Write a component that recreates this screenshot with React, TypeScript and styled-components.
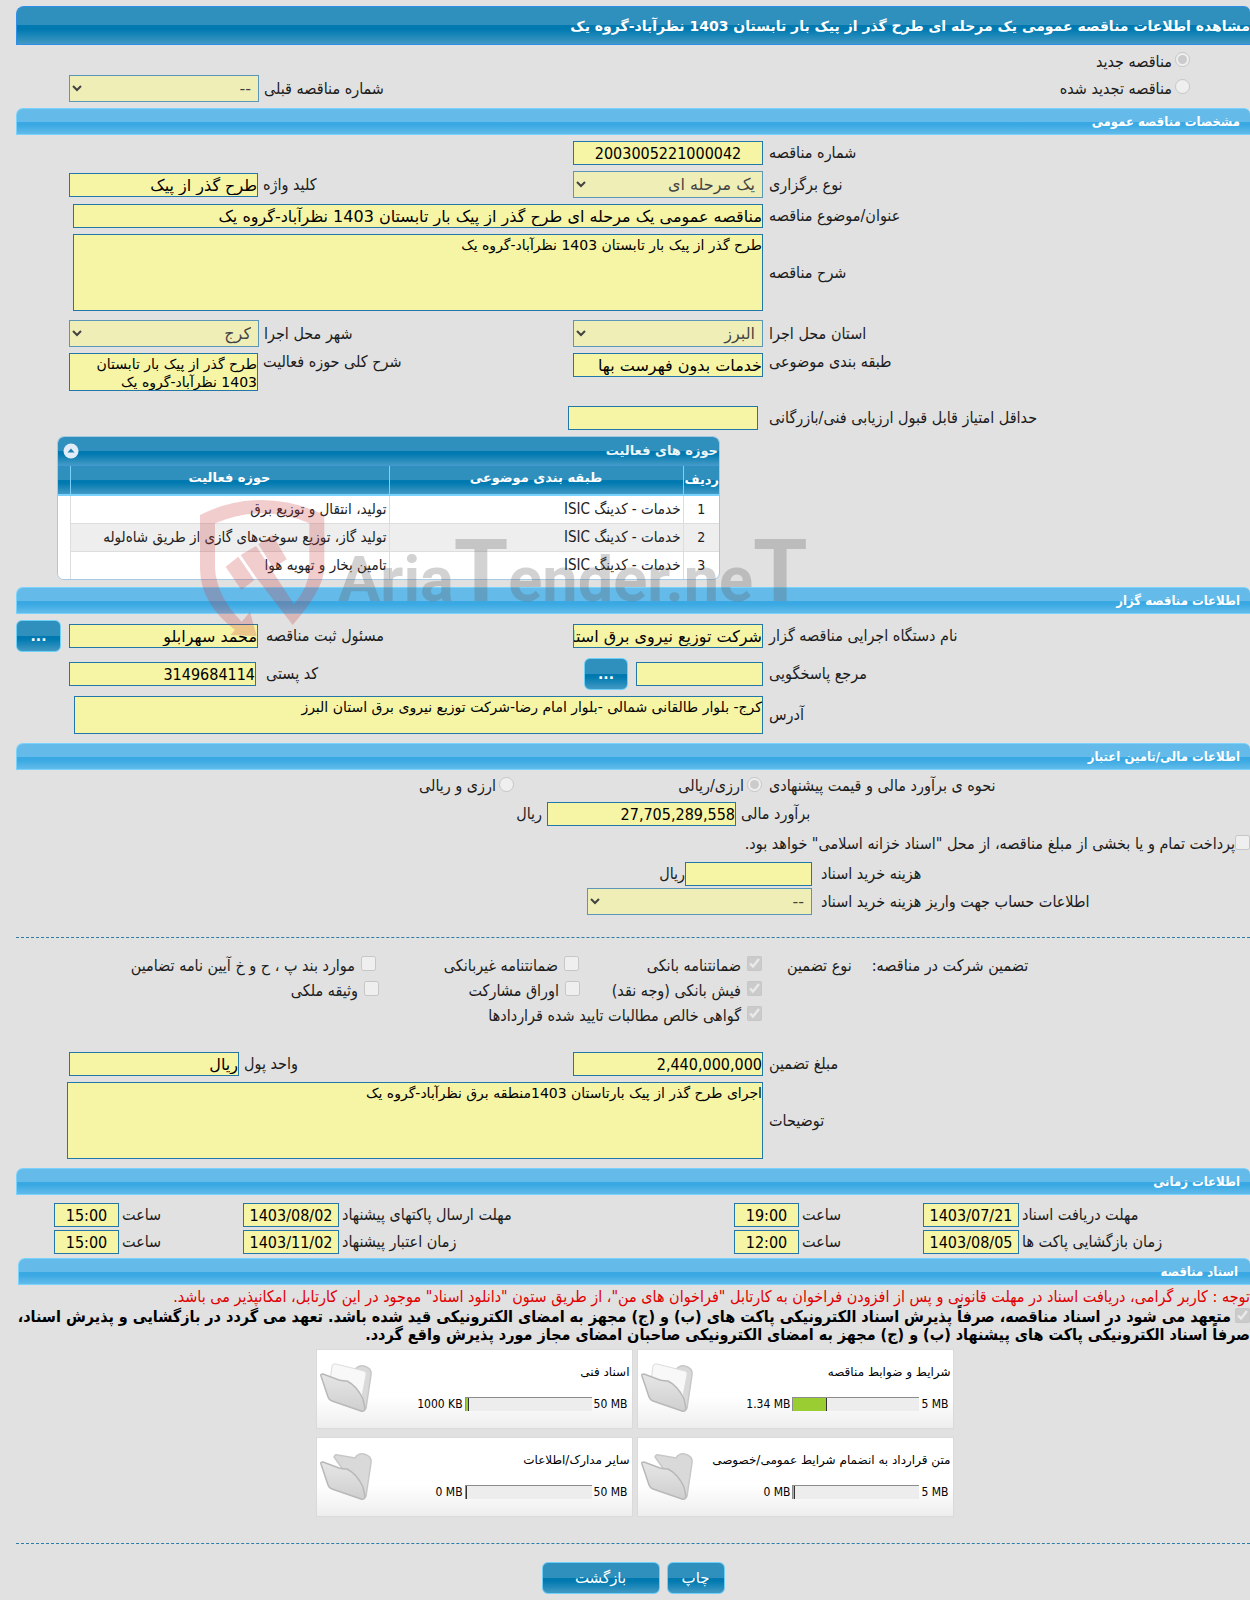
import React, { ReactNode } from "react";
import styled, { createGlobalStyle, css } from "styled-components";

const wide = `"DejaVu Sans", sans-serif`;
const narrow = `"DejaVu Sans Condensed", "DejaVu Sans", sans-serif`;

const GlobalStyle = createGlobalStyle`
  *, *::before, *::after { box-sizing: border-box; }
  html { background: #e1e1e1; }
  body {
    margin: 0;
    overflow-x: hidden;
    background: #e1e1e1;
    color: #1c1c1c;
    font-family: ${narrow};
    font-size: 16px;
    line-height: 18px;
  }
  input, select, textarea, button { font-family: ${wide}; margin: 0; }
`;

const deepBlue = css`
  background: linear-gradient(#2f90be 0, #2f90be 50%, #0079b0 50%, #0079b0 60%, #4299c4 100%);
`;

const field = css`
  border: 1px solid #2277a8;
  border-radius: 0;
  background: #f6f4a5;
  color: #000;
  outline: none;
`;

const Page = styled.main`
  position: relative;
  padding: 6px 0 6px 16px;
`;

const PageTitle = styled.h1`
  ${deepBlue}
  display: flex;
  align-items: center;
  height: 39px;
  margin: 0;
  border: 1px solid #2e8fe8;
  border-right: 0;
  border-radius: 8px 6px 0 0;
  color: #fff;
  font-family: ${wide};
  font-size: 14px;
  font-weight: bold;
`;

const SectionTitle = styled.h2<{ $inset?: boolean }>`
  display: flex;
  align-items: center;
  height: 27px;
  margin: 0 0 0 ${(p) => (p.$inset ? 2 : 0)}px;
  padding: 0 ${(p) => (p.$inset ? 12 : 10)}px;
  border: 1px solid #79d2fb;
  border-right: 0;
  border-radius: 7px 6px 0 0;
  background: linear-gradient(#64bbea 0, #64bbea 50%, #3aa9e3 52%, #3aa9e3 65%, #63bbea 100%);
  color: #fff;
  font-size: 13px;
  font-weight: bold;
`;

const Section = styled.section`
  display: flex;
  flex-direction: column;
  gap: 6px;
  padding: 6px 0;
`;

const Row = styled.div<{ $lead?: number; $space?: number; $top?: boolean }>`
  display: grid;
  grid-template-columns: minmax(0, ${(p) => p.$lead ?? 487}fr) minmax(0, ${(p) => 1234 - (p.$lead ?? 487)}fr);
  align-items: ${(p) => (p.$top ? "start" : "center")};
  margin-top: ${(p) => p.$space ?? 0}px;
`;

const LabelCell = styled.div<{ $gap?: number }>`
  display: flex;
  justify-content: flex-end;
  gap: 20px;
  padding-left: ${(p) => p.$gap ?? 6}px;
`;

const Body = styled.div<{ $gap?: number; $top?: boolean; $end?: number }>`
  display: flex;
  align-items: ${(p) => (p.$top ? "flex-start" : "center")};
  gap: ${(p) => p.$gap ?? 8}px;
  padding-left: ${(p) => p.$end ?? 0}px;
`;

const Side = styled.div<{ $end?: number; $gap?: number; $top?: boolean }>`
  display: flex;
  align-items: ${(p) => (p.$top ? "flex-start" : "center")};
  gap: ${(p) => p.$gap ?? 5}px;
  margin-right: auto;
  padding-left: ${(p) => p.$end ?? 53}px;
`;

const TextInput = styled.input<{ $w?: number; $center?: boolean; $digits?: boolean }>`
  ${field}
  width: ${(p) => (p.$w ? `${p.$w}px` : "100%")};
  height: 24px;
  padding: 1px 0 0;
  font-family: ${(p) => (p.$digits ? narrow : wide)};
  font-size: 16px;
  text-align: ${(p) => (p.$center ? "center" : "right")};
`;

const Area = styled.textarea<{ $w?: number; $h: number }>`
  ${field}
  display: block;
  width: ${(p) => (p.$w ? `${p.$w}px` : "100%")};
  height: ${(p) => p.$h}px;
  padding: 1px 0 0;
  resize: none;
  overflow: hidden;
  font-size: 14px;
  line-height: 18px;
`;

const Picker = styled.select<{ $w?: number }>`
  ${field}
  width: ${(p) => p.$w ?? 190}px;
  height: 27px;
  padding: 0 3px;
  font-size: 16px;
`;

const BlueButton = styled.button<{ $w: number }>`
  ${deepBlue}
  flex: none;
  width: ${(p) => p.$w}px;
  height: 32px;
  padding: 0;
  border: 1px solid #6fd0f7;
  border-radius: 6px;
  color: #fff;
  font-size: 15px;
`;

const MoreButton = styled(BlueButton)`
  font-size: 14px;
  font-weight: bold;
`;

const Tick = styled.input`
  flex: none;
  width: 15px;
  height: 15px;
`;

const Choice = styled.div<{ $w?: number; $gap?: number }>`
  display: flex;
  flex: none;
  align-items: center;
  gap: ${(p) => p.$gap ?? 3}px;
  width: ${(p) => (p.$w ? `${p.$w}px` : "auto")};
  min-height: 20px;

  ${Tick} { margin-bottom: 4px; }
`;

const Divider = styled.hr<{ $space: number }>`
  width: 100%;
  height: 0;
  margin: ${(p) => p.$space}px 0 0;
  border: 0;
  border-top: 1px dashed #2e7da6;
`;

const TypeChoice = styled.div`
  padding: 3px 0 6px;
`;

const TypeRow = styled.div`
  display: grid;
  grid-template-columns: minmax(0, 1fr) auto;
  align-items: center;
  height: 27px;
  padding-right: 60px;
`;

const Treasury = styled.div`
  display: flex;
  align-items: center;
  height: 24px;
`;

const Purchase = styled.div`
  display: grid;
  gap: 2px;
`;

const Guarantee = styled.div`
  display: grid;
  grid-auto-rows: 25px;
  padding: 15px 0 18px;
`;

const Spacer = styled.div`
  height: 3px;
`;

/* ---- activity table ---- */

const Panel = styled.div`
  width: 663px;
  margin: 0 auto 1px 41px;
  overflow: hidden;
  border: 1px solid #a6c9e2;
  border-radius: 7px;
  background: #fff;
`;

const PanelHead = styled.div`
  ${deepBlue}
  display: flex;
  align-items: center;
  justify-content: space-between;
  height: 29px;
  padding: 0 1px 0 5px;
  border-bottom: 1px solid #4297d7;
  color: #eaf5f7;
  font-family: ${wide};
  font-size: 13px;
  font-weight: bold;
`;

const Collapse = styled.button`
  display: block;
  width: 16px;
  height: 16px;
  padding: 0;
  border: 0;
  background: none;
`;

const Grid = styled.table`
  width: 100%;
  border-collapse: collapse;
  table-layout: fixed;
  font-size: 15px;

  th {
    ${deepBlue}
    height: 29px;
    padding: 0 2px 4px;
    border-bottom: 2px solid #79d2fb;
    border-left: 1px solid #79d2fb;
    color: #fff;
    font-family: ${wide};
    font-size: 13px;
    white-space: nowrap;
  }
  th:last-child, td:last-child { border-left: 0; }
  th:first-child { padding: 0 1px; overflow: hidden; }
  td {
    height: 28px;
    padding: 0 2px;
    border-left: 1px solid #ddd;
    border-bottom: 1px solid #ddd;
    color: #222;
    white-space: nowrap;
  }
  td:first-child { text-align: center; font-size: 14px; }
  td:last-child { background: #fff; border-bottom: 0; }
  tbody tr:nth-child(2) { background: #eee; }
  tbody tr:last-child td { border-bottom: 0; }
`;

/* ---- times ---- */

const Times = styled.div`
  display: grid;
  grid-template-columns:
    minmax(0, 231fr) 96px 124px 65px
    minmax(0, 395fr) 96px 124px 65px 38px;
  align-items: center;
  row-gap: 3px;
  padding: 8px 0 4px;
`;

const TimeLabel = styled.label`
  padding-left: 3px;
  text-align: left;
`;

/* ---- documents ---- */

const Notice = styled.p`
  margin: 3px 0 0;
  color: #e00000;
  white-space: nowrap;
`;

const Pledge = styled.div`
  margin: 2px 0 5px;
  color: #000;
  font-weight: bold;

  ${Tick} { vertical-align: -1px; margin-left: 4px; }
`;

const Cards = styled.div`
  display: grid;
  grid-template-columns: 317px 317px;
  justify-content: center;
  gap: 8px 4px;
  padding-left: 3px;
`;

const Card = styled.article`
  display: grid;
  grid-template-columns: 1fr 56px;
  height: 80px;
  padding: 0 2px 0 3px;
  border: 1px solid #dadada;
  background: linear-gradient(#fff 0, #fff 60%, #eee 100%);
  color: #000;

  svg { align-self: center; }
`;

const CardInfo = styled.div`
  display: flex;
  flex-direction: column;
  gap: 14px;
  padding-top: 13px;
`;

const CardName = styled.h3`
  margin: 0;
  font-family: ${wide};
  font-size: 12px;
  font-weight: normal;
  white-space: nowrap;
`;

const Usage = styled.div`
  display: flex;
  align-items: center;
  gap: 2px;
  padding-right: 2px;
  font-size: 12px;

  bdi { direction: ltr; white-space: nowrap; }
`;

const Track = styled.div`
  direction: ltr;
  width: 127px;
  height: 14px;
  border-top: 1px solid #8c8c8c;
  border-left: 1px solid #8c8c8c;
  background: #ededed;
`;

const Fill = styled.div`
  height: 100%;
  border-right: 1px solid #333;
  background: #9acd32;
`;

const Footer = styled.footer`
  display: flex;
  justify-content: center;
  gap: 7px;
  padding: 18px 0 0;
`;

/* ---- watermark ---- */

const Watermark = styled.div`
  position: absolute;
  top: 500px;
  left: 200px;
  display: flex;
  direction: ltr;
  align-items: flex-end;
  pointer-events: none;
`;

const Brand = styled.span`
  margin-left: 12px;
  padding-bottom: 18px;
  color: rgba(90, 90, 90, 0.27);
  font-family: Roboto, "Liberation Sans", sans-serif;
  font-size: 63px;
  font-weight: bold;
  line-height: 80px;

  big { font-size: 88px; }
`;

const Shield = () => (
  <svg width="126" height="138" viewBox="30 60 378 414" fill="rgba(205,55,60,0.25)">
    <path d="M30 105Q120 60 215 60Q310 60 403 105V265Q400 330 308 435L198 292L152 225L198 198L312 373Q356 320 358 270V130Q290 100 215 100Q145 100 75 130V265Q80 350 155 425L180 395L200 468L122 465L135 450Q30 370 30 265Z" />
    <path d="M107 260L145 230L193 300L154 330Z" />
    <path d="M205 192L248 165L290 238L250 265Z" />
  </svg>
);

const Folder = ({ full }: { full?: boolean }) => (
  <svg width="56" height="52" viewBox="0 0 56 52">
    <defs>
      <linearGradient id={full ? "ff" : "fe"} x1="0" y1="0" x2="0" y2="1">
        <stop offset="0" stopColor="#e6e6e6" />
        <stop offset="1" stopColor="#cfcfcf" />
      </linearGradient>
    </defs>
    <path d="M14 6Q15 3 18 4L35 7Q38 2 44 3Q52 5 51 12L46 45Q45 48 42 46Z" fill="#d9d9d9" stroke="#c8c8c8" strokeWidth="1.5" />
    {full && <path d="M12 3Q13 0 16 1L44 8Q47 9 46 12L41 38L10 18Z" fill="#f8f8f8" stroke="#dcdcdc" />}
    <path d="M1 13Q0 11 3 11L19 17Q23 18 27 18Q37 23 43 36L45 45Q45 49 41 48L12 38Q9 37 8 34Z" fill={`url(#${full ? "ff" : "fe"})`} stroke="#b8b8b8" strokeWidth="1.5" />
  </svg>
);

type CheckProps = { id: string; text: string; on?: boolean; w?: number; gap?: number; kind?: string; name?: string };
const Check = ({ id, text, on, w, gap = 6, kind = "checkbox", name }: CheckProps) => (
  <Choice $w={w} $gap={gap}>
    <Tick type={kind} id={id} name={name} defaultChecked={on} disabled />
    <label htmlFor={id}>{text}</label>
  </Choice>
);

type FieldRowProps = {
  id: string; label: string; children: ReactNode; lead?: number; gap?: number;
  space?: number; top?: boolean; end?: number; bodyGap?: number;
};
const FieldRow = ({ id, label, children, lead, gap, space, top, end, bodyGap }: FieldRowProps) => (
  <Row $lead={lead} $space={space} $top={top}>
    <LabelCell $gap={gap}><label htmlFor={id}>{label}</label></LabelCell>
    <Body $top={top} $end={end} $gap={bodyGap}>{children}</Body>
  </Row>
);

const activities = [
  "تولید، انتقال و توزیع برق",
  "تولید گاز، توزیع سوخت‌های گازی از طریق شاه‌لوله",
  "تامین بخار و تهویه هوا",
];

const times = [
  ["مهلت دریافت اسناد", "1403/07/21", "19:00", "مهلت ارسال پاکتهای پیشنهاد", "1403/08/02", "15:00"],
  ["زمان بازگشایی پاکت ها", "1403/08/05", "12:00", "زمان اعتبار پیشنهاد", "1403/11/02", "15:00"],
];

const documents = [
  { name: "شرایط و ضوابط مناقصه", max: "5 MB", used: "1.34 MB", share: 27 },
  { name: "اسناد فنی", max: "50 MB", used: "1000 KB", share: 3 },
  { name: "متن قرارداد به انضمام شرایط عمومی/خصوصی", max: "5 MB", used: "0 MB", share: 0 },
  { name: "سایر مدارک/اطلاعات", max: "50 MB", used: "0 MB", share: 0 },
];

export default function App() {
  return (
    <>
      <GlobalStyle />
      <Page dir="rtl" lang="fa">
        <PageTitle>مشاهده اطلاعات مناقصه عمومی یک مرحله ای طرح گذر از پیک بار تابستان 1403 نظرآباد-گروه یک</PageTitle>

        <TypeChoice>
          <TypeRow>
            <Check id="new" name="type" kind="radio" on gap={3} text="مناقصه جدید" />
          </TypeRow>
          <TypeRow>
            <Check id="renewed" name="type" kind="radio" gap={3} text="مناقصه تجدید شده" />
            <Side>
              <label htmlFor="previous">شماره مناقصه قبلی</label>
              <Picker id="previous" disabled><option>--</option></Picker>
            </Side>
          </TypeRow>
        </TypeChoice>

        <SectionTitle>مشخصات مناقصه عمومی</SectionTitle>
        <Section>
          <FieldRow id="number" label="شماره مناقصه">
            <TextInput id="number" $w={190} $center $digits defaultValue="2003005221000042" readOnly />
          </FieldRow>
          <FieldRow id="kind" label="نوع برگزاری">
            <Picker id="kind" disabled><option>یک مرحله ای</option></Picker>
            <Side>
              <label htmlFor="keyword">کلید واژه</label>
              <TextInput id="keyword" $w={189} defaultValue="طرح گذر از پیک" readOnly />
            </Side>
          </FieldRow>
          <FieldRow id="subject" label="عنوان/موضوع مناقصه" end={57}>
            <TextInput id="subject" defaultValue="مناقصه عمومی یک مرحله ای طرح گذر از پیک بار تابستان 1403 نظرآباد-گروه یک" readOnly />
          </FieldRow>
          <FieldRow id="description" label="شرح مناقصه" end={57}>
            <Area id="description" $h={77} defaultValue="طرح گذر از پیک بار تابستان 1403 نظرآباد-گروه یک" readOnly />
          </FieldRow>
          <FieldRow id="province" label="استان محل اجرا" space={3}>
            <Picker id="province" disabled><option>البرز</option></Picker>
            <Side>
              <label htmlFor="city">شهر محل اجرا</label>
              <Picker id="city" disabled><option>کرج</option></Picker>
            </Side>
          </FieldRow>
          <FieldRow id="category" label="طبقه بندی موضوعی" top>
            <TextInput id="category" $w={190} defaultValue="خدمات بدون فهرست بها" readOnly />
            <Side $top>
              <label htmlFor="scope">شرح کلی حوزه فعالیت</label>
              <Area id="scope" $w={189} $h={38} defaultValue="طرح گذر از پیک بار تابستان 1403 نظرآباد-گروه یک" readOnly />
            </Side>
          </FieldRow>
          <FieldRow id="score" label="حداقل امتیاز قابل قبول ارزیابی فنی/بازرگانی" lead={492} gap={11} space={9}>
            <TextInput id="score" $w={190} defaultValue="" readOnly />
          </FieldRow>
          <Panel>
            <PanelHead>
              <span>حوزه های فعالیت</span>
              <Collapse type="button" aria-label="بستن">
                <svg width="16" height="16" viewBox="0 0 16 16">
                  <circle cx="8" cy="8" r="7.5" fill="#e1ecf8" />
                  <path d="M4.500 9.500L8 5.500L11.500 9.500Z" fill="#1f80b2" />
                </svg>
              </Collapse>
            </PanelHead>
            <Grid>
              <colgroup>
                <col width="36" /><col width="294" /><col /><col width="12" />
              </colgroup>
              <thead>
                <tr><th>ردیف</th><th>طبقه بندی موضوعی</th><th>حوزه فعالیت</th><th /></tr>
              </thead>
              <tbody>
                {activities.map((name, i) => (
                  <tr key={name}><td>{i + 1}</td><td>خدمات - کدینگ ISIC</td><td>{name}</td><td /></tr>
                ))}
              </tbody>
            </Grid>
          </Panel>
        </Section>

        <SectionTitle>اطلاعات مناقصه گزار</SectionTitle>
        <Section>
          <FieldRow id="agency" label="نام دستگاه اجرایی مناقصه گزار">
            <TextInput id="agency" $w={190} defaultValue="شرکت توزیع نیروی برق استان البرز" readOnly />
            <Side $end={0} $gap={8}>
              <label htmlFor="registrar">مسئول ثبت مناقصه</label>
              <TextInput id="registrar" $w={189} defaultValue="محمد سهرابلو" readOnly />
              <MoreButton type="button" $w={45}>...</MoreButton>
            </Side>
          </FieldRow>
          <FieldRow id="contact" label="مرجع پاسخگویی">
            <TextInput id="contact" $w={127} defaultValue="" readOnly />
            <MoreButton type="button" $w={44}>...</MoreButton>
            <Side $gap={10}>
              <label htmlFor="postal">کد پستی</label>
              <TextInput id="postal" $w={187} $digits defaultValue="3149684114" readOnly />
            </Side>
          </FieldRow>
          <FieldRow id="address" label="آدرس" end={58}>
            <Area id="address" $h={38} defaultValue="کرج- بلوار طالقانی شمالی -بلوار امام رضا-شرکت توزیع نیروی برق استان البرز" readOnly />
          </FieldRow>
        </Section>
        <Spacer />

        <SectionTitle>اطلاعات مالی/تامین اعتبار</SectionTitle>
        <Section>
          <Row $lead={488}>
            <LabelCell $gap={7}>نحوه ی برآورد مالی و قیمت پیشنهادی</LabelCell>
            <Body $gap={0}>
              <Check id="either" name="currency-mode" kind="radio" on w={248} gap={3} text="ارزی/ریالی" />
              <Check id="both" name="currency-mode" kind="radio" gap={3} text="ارزی و ریالی" />
            </Body>
          </Row>
          <FieldRow id="estimate" label="برآورد مالی" lead={514} gap={5} bodyGap={5}>
            <TextInput id="estimate" $w={189} $digits defaultValue="27,705,289,558" readOnly />
            <span>ریال</span>
          </FieldRow>
          <Treasury>
            <Check id="treasury" gap={0} text={'پرداخت تمام و یا بخشی از مبلغ مناقصه، از محل "اسناد خزانه اسلامی" خواهد بود.'} />
          </Treasury>
          <Purchase>
            <FieldRow id="cost" label="هزینه خرید اسناد" lead={438} gap={9} bodyGap={0}>
              <TextInput id="cost" $w={127} defaultValue="" readOnly />
              <span>ریال</span>
            </FieldRow>
            <FieldRow id="account" label="اطلاعات حساب جهت واریز هزینه خرید اسناد" lead={438} gap={9}>
              <Picker id="account" $w={225} disabled><option>--</option></Picker>
            </FieldRow>
          </Purchase>
        </Section>

        <Divider $space={16} />
        <Guarantee>
          <Row $lead={488}>
            <LabelCell $gap={25}><span>تضمین شرکت در مناقصه:</span><span>نوع تضمین</span></LabelCell>
            <Body $gap={0}>
              <Check id="g1" on w={183} text="ضمانتنامه بانکی" />
              <Check id="g2" w={203} text="ضمانتنامه غیربانکی" />
              <Check id="g3" text="موارد بند پ ، ح و خ آیین نامه تضامین" />
            </Body>
          </Row>
          <Row $lead={488}>
            <span />
            <Body $gap={0}>
              <Check id="g4" on w={182} text="فیش بانکی (وجه نقد)" />
              <Check id="g5" w={201} text="اوراق مشارکت" />
              <Check id="g6" text="وثیقه ملکی" />
            </Body>
          </Row>
          <Row $lead={488}>
            <span />
            <Body><Check id="g7" on text="گواهی خالص مطالبات تایید شده قراردادها" /></Body>
          </Row>
        </Guarantee>
        <Section>
          <FieldRow id="amount" label="مبلغ تضمین">
            <TextInput id="amount" $w={190} $digits defaultValue="2,440,000,000" readOnly />
            <Side>
              <label htmlFor="unit">واحد پول</label>
              <TextInput id="unit" $w={170} defaultValue="ریال" readOnly />
            </Side>
          </FieldRow>
          <FieldRow id="notes" label="توضیحات" end={51}>
            <Area id="notes" $h={77} defaultValue="اجرای طرح گذر از پیک بارتاستان 1403منطقه برق نظرآباد-گروه یک" readOnly />
          </FieldRow>
        </Section>
        <Spacer />

        <SectionTitle>اطلاعات زمانی</SectionTitle>
        <Times>
          {times.flatMap((line, r) =>
            [0, 3].map((at) => (
              <React.Fragment key={`${r}-${at}`}>
                <TimeLabel htmlFor={`date${r}${at}`}>{line[at]}</TimeLabel>
                <TextInput id={`date${r}${at}`} $center $digits defaultValue={line[at + 1]} readOnly />
                <TimeLabel htmlFor={`time${r}${at}`}>ساعت</TimeLabel>
                <TextInput id={`time${r}${at}`} $center $digits defaultValue={line[at + 2]} readOnly />
                {at === 3 && <span />}
              </React.Fragment>
            ))
          )}
        </Times>

        <SectionTitle $inset>اسناد مناقصه</SectionTitle>
        <Notice>
          توجه : کاربر گرامی، دریافت اسناد در مهلت قانونی و پس از افزودن فراخوان به کارتابل "فراخوان های من"، از طریق ستون "دانلود اسناد" موجود در این کارتابل، امکانپذیر می باشد.
        </Notice>
        <Pledge>
          <Tick type="checkbox" id="pledge" defaultChecked disabled />
          <label htmlFor="pledge">
            متعهد می شود در اسناد مناقصه، صرفاً پذیرش اسناد الکترونیکی پاکت های (ب) و (ج) مجهز به امضای الکترونیکی قید شده باشد. تعهد می گردد در بازگشایی و پذیرش اسناد، صرفاً اسناد الکترونیکی پاکت های پیشنهاد (ب) و (ج) مجهز به امضای الکترونیکی صاحبان امضای مجاز مورد پذیرش واقع گردد.
          </label>
        </Pledge>
        <Cards>
          {documents.map((doc) => (
            <Card key={doc.name}>
              <CardInfo>
                <CardName>{doc.name}</CardName>
                <Usage>
                  <bdi>{doc.max}</bdi>
                  <Track role="progressbar" aria-label={doc.name} aria-valuenow={doc.share}>
                    <Fill style={{ width: `${Math.max(doc.share, 1)}%` }} />
                  </Track>
                  <bdi>{doc.used}</bdi>
                </Usage>
              </CardInfo>
              <Folder full={doc.share > 0} />
            </Card>
          ))}
        </Cards>
        <Divider $space={26} />
        <Footer>
          <BlueButton type="button" $w={58}>چاپ</BlueButton>
          <BlueButton type="button" $w={118}>بازگشت</BlueButton>
        </Footer>

        <Watermark aria-hidden="true">
          <Shield />
          <Brand>Aria<big>T</big>ender.ne<big>T</big></Brand>
        </Watermark>
      </Page>
    </>
  );
}
